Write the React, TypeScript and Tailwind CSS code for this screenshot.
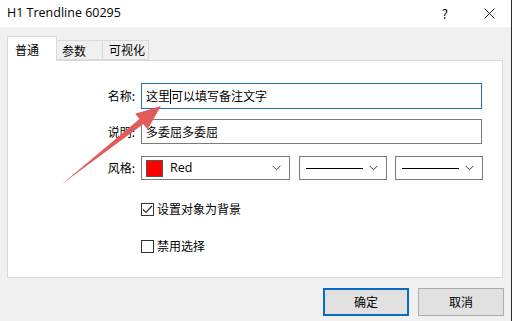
import React from "react";

const FONT = { fontFamily: '"Noto Sans CJK SC", "Noto Sans", sans-serif' };

function Chevron() {
  return (
    <svg width="9" height="6" viewBox="0 0 9 6" className="shrink-0">
      <path d="M0.5 0.8 L4.5 4.8 L8.5 0.8" fill="none" stroke="#444" strokeWidth="1" />
    </svg>
  );
}

function LineCombo({ width }: { width: string }) {
  return (
    <div className={`flex h-[24px] ${width} items-center border border-[#7a7a7a] bg-white pl-[6px] pr-[8px]`}>
      <div className="h-px w-[57px] bg-black" />
      <div className="flex-1" />
      <Chevron />
    </div>
  );
}

export default function App() {
  return (
    <div
      className="relative h-[321px] w-[512px] overflow-hidden border-r border-[#2b2b2b] bg-[#f0f0f0] text-[12px] text-black"
      style={FONT}
    >
      {/* Title bar */}
      <div className="flex h-[27px] items-center bg-white pl-[7px] pr-[16px] text-[13px]">
        <span style={{ fontFamily: '"Open Sans", "Noto Sans", sans-serif' }} className="text-[12.5px]">
          H1 Trendline 60295
        </span>
        <div className="flex-1" />
        <span className="mr-[36px] text-[13px]">?</span>
        <svg width="11" height="11" viewBox="0 0 11 11">
          <path d="M0.5 0.5 L10.5 10.5 M10.5 0.5 L0.5 10.5" stroke="#222" strokeWidth="1" />
        </svg>
      </div>

      {/* Tabs */}
      <div className="relative z-10 ml-[7px] mt-[9px] flex h-[25px] items-end">
        <div className="flex h-[25px] w-[50px] items-start border border-b-0 border-[#d9d9d9] bg-white pl-[7px] pt-[4px]">
          普通
        </div>
        <div className="mb-[1px] flex h-[20px] w-[46px] items-center border border-l-0 border-[#d9d9d9] pl-[5px] pt-[2px]">
          参数
        </div>
        <div className="mb-[1px] flex h-[20px] w-[46px] items-center border border-l-0 border-[#d9d9d9] pl-[6px]">
          可视化
        </div>
      </div>

      {/* Panel */}
      <div className="-mt-px ml-[7px] flex h-[218px] w-[496px] flex-col border border-[#d9d9d9] bg-white pt-[22px]">
        <div className="flex items-center">
          <div className="w-[128px] pr-[1px] text-right">名称:</div>
          <div className="ml-[5px] flex h-[26px] w-[341px] items-center border border-[#1e72b0] pl-[4px]">
            这里
            <span className="h-[15px] w-px bg-black" />
            可以填写备注文字
          </div>
        </div>
        <div className="mt-[10px] flex items-center">
          <div className="w-[128px] pr-[1px] text-right">说明:</div>
          <div className="ml-[5px] flex h-[25px] w-[341px] items-center border border-[#7a7a7a] pl-[4px]">
            多委屈多委屈
          </div>
        </div>
        <div className="mt-[12px] flex items-center">
          <div className="w-[128px] pr-[1px] text-right">风格:</div>
          <div className="ml-[5px] flex h-[24px] w-[149px] items-center border border-[#7a7a7a] bg-white pl-[4px] pr-[8px]">
            <div className="h-[17px] w-[17px] border border-[#555] bg-[#ff0000]" />
            <span className="ml-[7px] text-[12.5px]" style={{ fontFamily: '"Open Sans", sans-serif' }}>
              Red
            </span>
            <div className="flex-1" />
            <Chevron />
          </div>
          <div className="ml-[9px]">
            <LineCombo width="w-[88px]" />
          </div>
          <div className="ml-[8px]">
            <LineCombo width="w-[88px]" />
          </div>
        </div>

        <div className="ml-[133px] mt-[20px] flex items-center">
          <div className="flex h-[13px] w-[13px] items-center justify-center border border-[#333] bg-white">
            <svg width="11" height="9" viewBox="0 0 11 9">
              <path d="M1 4.5 L4 7.5 L10 1" fill="none" stroke="#333" strokeWidth="1.2" />
            </svg>
          </div>
          <span className="ml-[3px]">设置对象为背景</span>
        </div>
        <div className="ml-[133px] mt-[19px] flex items-center">
          <div className="h-[13px] w-[13px] border border-[#333] bg-white" />
          <span className="ml-[3px]">禁用选择</span>
        </div>
      </div>

      {/* Buttons */}
      <div className="mt-[10px] flex justify-end gap-[9px] pr-[7px]">
        <button className="flex h-[28px] w-[86px] items-center justify-center border-2 border-[#0a6cc0] bg-[#e1e1e1]">
          确定
        </button>
        <button className="flex h-[28px] w-[86px] items-center justify-center border border-[#adadad] bg-[#e1e1e1]">
          取消
        </button>
      </div>

      {/* Annotation arrow */}
      <svg className="pointer-events-none absolute left-0 top-0" width="512" height="321">
        <polygon
          points="62,184 139.5,119.1 135.2,113.7 161,106 147.6,129.3 143.3,123.9"
          fill="#e35a5a"
        />
      </svg>
    </div>
  );
}
